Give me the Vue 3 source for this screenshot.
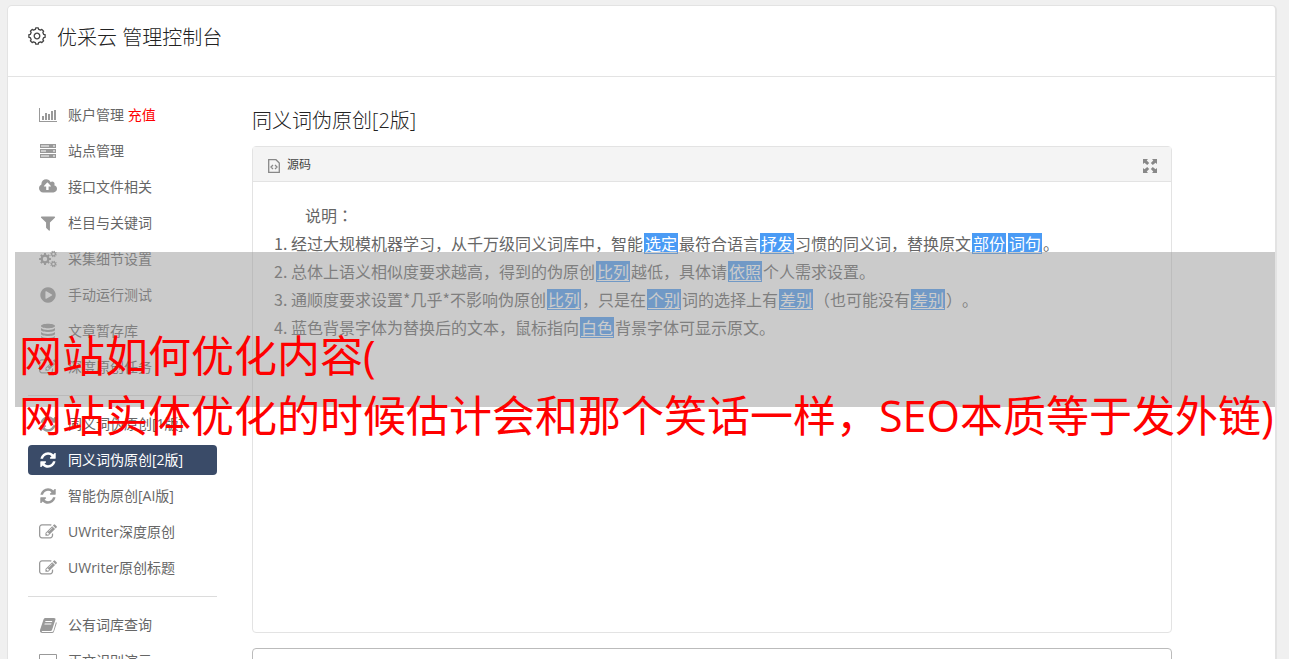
<script setup>
const filled = {
  filter: { box: '0 0 1792 1792', d: 'M1595 295q17 41-14 70l-493 493v742q0 42-39 59-13 5-25 5-27 0-45-19l-256-256q-19-19-19-45v-486l-493-493q-31-29-14-70 17-39 59-39h1280q42 0 59 39z' },
  play: { box: '0 0 1792 1792', d: 'M896 128q209 0 385.5 103t279.5 279.5 103 385.5-103 385.5-279.5 279.5-385.5 103-385.5-103-279.5-279.5-103-385.5 103-385.5 279.5-279.5 385.5-103zm384 823q32-18 32-55t-32-55l-544-320q-31-19-64-1-32 19-32 56v640q0 37 32 56 16 8 32 8 17 0 32-9z' },
  refresh: { box: '0 0 1792 1792', d: 'M1639 1056q0 5-1 7-64 268-268 434.5t-478 166.5q-146 0-282.5-55t-243.5-157l-129 129q-19 19-45 19t-45-19-19-45v-448q0-26 19-45t45-19h448q26 0 45 19t19 45-19 45l-137 137q71 66 161 102t187 36q134 0 250-65t186-179q11-17 53-117 8-23 30-23h192q13 0 22.5 9.5t9.5 22.5zm25-800v448q0 26-19 45t-45 19h-448q-26 0-45-19t-19-45 19-45l138-138q-148-137-349-137-134 0-250 65t-186 179q-11 17-53 117-8 23-30 23h-199q-13 0-22.5-9.5t-9.5-22.5v-7q65-268 270-434.5t480-166.5q146 0 284 55.5t245 156.5l130-129q19-19 45-19t45 19 19 45z' },
  upload: { box: '-64 0 1920 1920', d: 'M1216 864q0-14-9-23l-352-352q-9-9-23-9t-23 9l-351 351q-10 12-10 24 0 14 9 23t23 9h224v352q0 13 9.5 22.5t22.5 9.5h192q13 0 22.5-9.5t9.5-22.5v-352h224q13 0 22.5-9.5t9.5-22.5zm640 288q0 159-112.5 271.5t-271.5 112.5h-1088q-185 0-316.5-131.5t-131.5-316.5q0-130 70-240t188-165q-2-30-2-43 0-212 150-362t362-150q156 0 285.5 87t188.5 231q71-62 166-62 106 0 181 75t75 181q0 76-41 138 130 31 213.5 135.5t83.5 238.5z' },
  edit: { box: '0 0 1792 1792', d: 'M888 1184l116-116-152-152-116 116v56h96v96h56zm440-720q-16-16-33 1l-350 350q-17 17-1 33t33-1l350-350q17-17 1-33zm80 594v190q0 119-84.5 203.5t-203.5 84.5h-832q-119 0-203.5-84.5t-84.5-203.5v-832q0-119 84.5-203.5t203.5-84.5h832q63 0 117 25 15 7 18 23 3 17-9 29l-49 49q-14 14-32 8-23-6-45-6h-832q-66 0-113 47t-47 113v832q0 66 47 113t113 47h832q66 0 113-47t47-113v-126q0-13 9-22l64-64q15-15 35-7t20 29zm-96-738l288 288-672 672h-288v-288zm444 132l-92 92-288-288 92-92q28-28 68-28t68 28l152 152q28 28 28 68t-28 68z' },
  bars: { box: '0 0 18 18', d: 'M0 2h1v13h17v1H0zM3 10h2v4H3zM6 7h2v7H6zM9 8h2v6H9zM12 5h2v9h-2zM15 4h2v10h-2z' },
  server: { box: '0 0 18 18', d: 'M1 2h16v4H1zM2 3.500v1h8v-1zM14 3.500v1h2v-1zM1 7h16v4H1zM2 8.500v1h5v-1zM14 8.500v1h2v-1zM1 12h16v4H1zM2 13.500v1h8v-1zM14 13.500v1h2v-1z' },
  database: { box: '0 0 18 18', d: 'M2 4C2 1 16 1 16 4S2 7 2 4zM2 6c2 2.600 12 2.600 14 0v2c0 2.600-14 2.600-14 0zM2 10c2 2.600 12 2.600 14 0v2c0 2.600-14 2.600-14 0zM2 14c2 2.600 12 2.600 14 0v1c0 3-14 3-14 0z' },
  book: { box: '0 0 18 18', d: 'M6 2h9q2 0 1.500 1.500L13 14q-.4 1-1.500 1H3.500q-1 0-.8.5t1 .5H13q1 0 1.400-1L17 6q1 .5.6 1.500L15 15.500q-.5 1.500-2 1.500H3.500Q.5 17 1 14L4.500 3.500Q5 2 6 2zM6.500 5l-.3 1H13l.3-1zM5.700 7.500l-.3 1h6.800l.3-1z' },
  desktop: { box: '0 0 18 18', d: 'M1 2h16q1 0 1 1v11q0 1-1 1h-6v2h2v1H5v-1h2v-2H1q-1 0-1-1V3q0-1 1-1zM1 3v9h16V3z' }
}

function gear(cx, cy, outer, inner, hole, teeth, turn) {
  const points = []
  const step = (Math.PI * 2) / teeth
  for (let i = 0; i < teeth; i++) {
    const a = i * step + turn
    for (const [r, f] of [[inner, -0.3], [outer, -0.2], [outer, 0.2], [inner, 0.3]]) {
      points.push(`${(cx + r * Math.cos(a + f * step)).toFixed(2)} ${(cy + r * Math.sin(a + f * step)).toFixed(2)}`)
    }
  }
  return `M${points.join('L')}ZM${cx - hole} ${cy}a${hole} ${hole} 0 1 0 ${hole * 2} 0a${hole} ${hole} 0 1 0 ${-hole * 2} 0Z`
}
filled.cogs = {
  box: '0 0 18 18',
  d: gear(6, 9, 6, 4.5, 2.2, 8, 0) + gear(14.5, 4, 3.4, 2.4, 1.2, 8, 0.3) + gear(14.5, 14, 3.4, 2.4, 1.2, 8, 0.3)
}
const titleGear = gear(9, 9, 8.2, 6.9, 2.8, 8, 0)

const groups = [
  [
    { icon: 'bars', text: '账户管理', extra: '充值' },
    { icon: 'server', text: '站点管理' },
    { icon: 'upload', text: '接口文件相关' },
    { icon: 'filter', text: '栏目与关键词' },
    { icon: 'cogs', text: '采集细节设置' },
    { icon: 'play', text: '手动运行测试' },
    { icon: 'database', text: '文章暂存库' },
    { icon: 'edit', text: '深度原创任务' }
  ],
  [
    { icon: 'refresh', text: '同义词伪原创[1版]' },
    { icon: 'refresh', text: '同义词伪原创[2版]', active: true },
    { icon: 'refresh', text: '智能伪原创[AI版]' },
    { icon: 'edit', text: 'UWriter深度原创' },
    { icon: 'edit', text: 'UWriter原创标题' }
  ],
  [
    { icon: 'book', text: '公有词库查询' },
    { icon: 'desktop', text: '正文识别演示' }
  ]
]

// Words in braces are the replaced ones.
const notes = [
  '经过大规模机器学习，从千万级同义词库中，智能{选定}最符合语言{抒发}习惯的同义词，替换原文{部份}{词句}。',
  '总体上语义相似度要求越高，得到的伪原创{比列}越低，具体请{依照}个人需求设置。',
  '通顺度要求设置*几乎*不影响伪原创{比列}，只是在{个别}词的选择上有{差别}（也可能没有{差别}）。',
  '蓝色背景字体为替换后的文本，鼠标指向{白色}背景字体可显示原文。'
].map(split)

function split(text) {
  return text.split(/(\{[^}]+\})/).filter(Boolean).map((s) =>
    s[0] === '{' ? { tag: 'u', text: s.slice(1, -1) } : { tag: 'span', text: s }
  )
}
</script>

<template>
  <div class="page">
    <div class="card">
      <header class="top">
        <svg class="gear" viewBox="0 0 18 18" aria-hidden="true">
          <path :d="titleGear" />
        </svg>
        <h1>优采云 管理控制台</h1>
      </header>
      <div class="body">
        <nav class="side">
          <ul v-for="(group, g) in groups" :key="g">
            <li v-for="item in group" :key="item.text">
              <a href="#" :class="{ active: item.active }">
                <svg :viewBox="filled[item.icon].box" aria-hidden="true">
                  <path fill-rule="evenodd" :d="filled[item.icon].d" />
                </svg>
                <span>{{ item.text }} <em v-if="item.extra">{{ item.extra }}</em></span>
              </a>
            </li>
          </ul>
        </nav>
        <main>
          <h2>同义词伪原创[2版]</h2>
          <section class="editor">
            <div class="toolbar">
              <button type="button" class="source">
                <svg viewBox="0 0 12 14" aria-hidden="true">
                  <path d="M.7.7h7.300l3.300 3.300v9.300H.7zM5 6L3 8l2 2M7 6l2 2-2 2" />
                </svg>
                <span>源码</span>
              </button>
              <button type="button" class="expand" aria-label="全屏">
                <svg viewBox="0 0 14 14" aria-hidden="true">
                  <path d="M0 0h5L3.700 1.500 6.200 4 4.200 6 1.500 3.700 0 5zM14 0v5l-1.500-1.300L9.800 6l-2-2 2.500-2.500L9 0zM0 14V9l1.500 1.300L4.200 8l2 2-2.500 2.500L5 14zM14 14H9l1.300-1.500L7.800 10l2-2 2.700 2.300L14 9z" />
                </svg>
              </button>
            </div>
            <div class="content">
              <p>说明<span class="mid">：</span></p>
              <ol>
                <li v-for="(line, n) in notes" :key="n">
                  <component :is="part.tag" v-for="(part, i) in line" :key="i">{{ part.text }}</component>
                </li>
              </ol>
            </div>
          </section>
          <section class="result"></section>
        </main>
      </div>
    </div>
    <div class="banner">网站如何优化内容(<br>网站实体优化的时候估计会和那个笑话一样，SEO本质等于发外链)</div>
  </div>
</template>

<style>
body {
  margin: 0;
  overflow: hidden;
  background: #f0f0f0;
}
</style>

<style scoped>
.page {
  position: relative;
  box-sizing: border-box;
  height: 100vh;
  overflow: hidden;
  padding: 5px 12px 0 7px;
  font-family: "Open Sans", "Noto Sans CJK SC", sans-serif;
  font-size: 14px;
  color: #666;
}
.mid {
  font-family: "Noto Sans CJK TC", sans-serif;
}
.card {
  border: 1px solid #e3e3e3;
  border-right-width: 2px;
  border-radius: 5px 5px 0 0;
  background: #fff;
  min-height: 100vh;
}
.top {
  display: flex;
  align-items: center;
  gap: 11px;
  height: 60px;
  padding: 0 20px 10px;
  border-bottom: 1px solid #e3e3e3;
}
h1,
h2 {
  margin: 0;
  font-size: 20px;
  line-height: 28px;
  font-weight: 300;
  color: #222;
}
h1 {
  padding-top: 4px;
}
.gear {
  width: 18px;
  height: 18px;
  fill: none;
  stroke: #444;
  stroke-width: 1.3;
  stroke-linejoin: round;
}
.body {
  display: flex;
  gap: 35px;
  padding: 23px 103px 0 20px;
}
.side {
  flex: 0 0 189px;
}
ul {
  list-style: none;
  margin: 0;
  padding: 0;
  display: grid;
  gap: 6px;
}
ul + ul {
  margin-top: 13px;
  padding-top: 13px;
  border-top: 1px solid #dcdcdc;
}
.side a {
  display: flex;
  align-items: center;
  gap: 11px;
  height: 30px;
  padding: 0 11px;
  border-radius: 4px;
  color: #666;
  text-decoration: none;
}
.side a svg {
  width: 18px;
  height: 18px;
  fill: #999;
}
.side a span {
  padding-bottom: 2px;
}
.side a.active {
  background: #3a4b68;
  color: #fff;
}
.side a.active svg {
  fill: #fff;
}
.side em {
  font-style: normal;
  color: #f00;
}
main {
  flex: 1;
  min-width: 0;
}
h2 {
  margin: 7px 0 11px;
}
.editor {
  border: 1px solid #e3e3e3;
  border-radius: 4px;
}
.toolbar {
  display: flex;
  justify-content: space-between;
  align-items: center;
  height: 34px;
  padding: 0 14px 0 15px;
  border-bottom: 1px solid #e3e3e3;
  background: #f4f4f4;
}
button {
  display: flex;
  align-items: center;
  padding: 0;
  border: 0;
  background: none;
  font: inherit;
  font-size: 12px;
  color: #444;
}
.source {
  gap: 7px;
}
.source svg {
  width: 12px;
  height: 14px;
  padding-top: 4px;
  fill: none;
  stroke: #888;
  stroke-width: 1.3;
}
.expand {
  padding-top: 4px;
}
.expand svg {
  width: 14px;
  height: 14px;
  fill: #888;
}
.content {
  min-height: 431px;
  padding-top: 19px;
  font-family: "Noto Sans CJK SC", sans-serif;
  font-size: 16px;
  line-height: 28px;
  text-spacing-trim: space-all;
}
.content p {
  margin: 0;
  padding-left: 52px;
}
ol {
  margin: 0;
  padding-left: 38px;
}
u {
  margin: 0 1px;
  padding: 0 1px;
  background: linear-gradient(#4a9bf5, #4a9bf5) center / 100% 21px no-repeat;
  color: #fff;
  text-underline-offset: 2px;
}
.result {
  height: 120px;
  margin-top: 15px;
  border: 1px solid #bbb;
  border-radius: 4px;
}
.banner {
  position: absolute;
  top: 252px;
  left: 15px;
  right: 14px;
  box-sizing: border-box;
  height: 155px;
  padding: 74px 0 0 4px;
  background: rgba(151, 151, 151, 0.5);
  color: #f00;
  font-size: 43px;
  line-height: 60px;
  white-space: nowrap;
}
</style>
